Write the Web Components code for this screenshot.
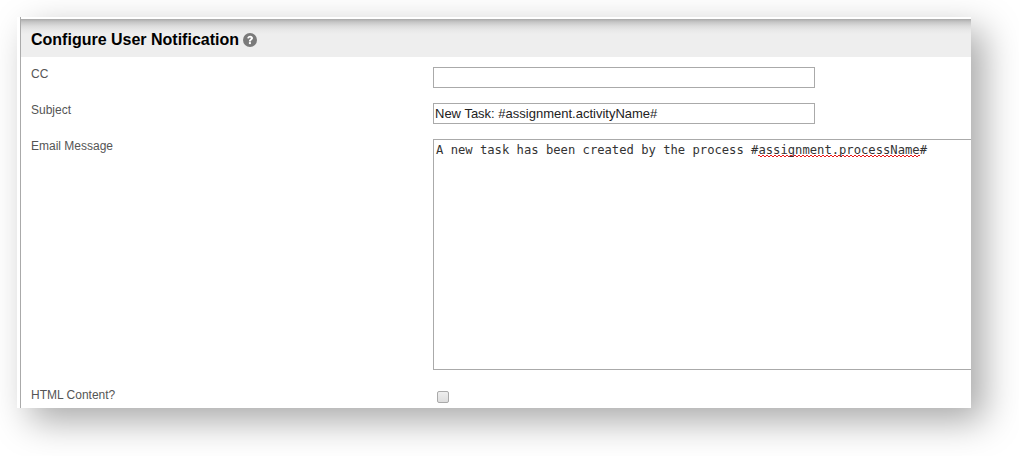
<!DOCTYPE html>
<html>
<head>
<meta charset="utf-8">
<title>Configure User Notification</title>
<style>
  html, body { margin: 0; background: #fff; }
  body { height: 456px; overflow: hidden; padding-top: 17px; padding-left: 17px; box-sizing: border-box; font-family: "Liberation Sans", Arial, sans-serif; }
</style>
</head>
<body>
<notification-panel>
  <panel-header slot="header">Configure User Notification</panel-header>
  <form-row label="CC"><text-field></text-field></form-row>
  <form-row label="Subject"><text-field>New Task: #assignment.activityName#</text-field></form-row>
  <form-row label="Email Message"><message-field>A new task has been created by the process #<u>assignment.processName</u>#</message-field></form-row>
  <form-row label="HTML Content?" centered><check-field></check-field></form-row>
</notification-panel>

<script>
class NotificationPanel extends HTMLElement {
  constructor() {
    super();
    this.attachShadow({ mode: 'open' });
    this.shadowRoot.innerHTML = `
    <style>
      :host {
        display: block;
        width: 954px;
        height: 391px;
        background: #fff;
        box-shadow: 13px 13px 34px rgba(0, 0, 0, 0.34);
      }
      .frame {
        height: 389px;
        margin-left: 3px;
        padding-top: 2px;
        overflow: hidden;
        position: relative;
      }
      .frame::before {
        content: '';
        position: absolute;
        left: 0;
        top: 0;
        bottom: 0;
        width: 1px;
        background: #aaa;
      }
      .rows {
        display: flex;
        flex-direction: column;
        gap: 15px;
        padding: 10px 0 0 11px;
      }
    </style>
    <div class="frame">
      <slot name="header"></slot>
      <div class="rows"><slot></slot></div>
    </div>
    `;
  }
}

class PanelHeader extends HTMLElement {
  constructor() {
    super();
    this.attachShadow({ mode: 'open' });
    this.shadowRoot.innerHTML = `
    <style>
      :host {
        display: flex;
        align-items: center;
        gap: 4px;
        height: 38px;
        padding: 4px 0 0 11px;
        box-sizing: border-box;
        background: linear-gradient(#a9a9a9 0, #c6c6c6 3px, #dcdcdc 7px, #e8e8e8 11px, #eee 15px);
        font: bold 16px "Liberation Sans", Arial, sans-serif;
        color: #000;
      }
      svg {
        display: block;
        width: 14px;
        height: 14px;
      }
    </style>
    <span><slot></slot></span>
    <svg viewBox="0 0 14 14">
      <circle cx="7" cy="7" r="7" fill="#7a7a7a"/>
      <path d="M4.2 5.3C4.4 3.6 5.6 2.7 7.1 2.7c1.7 0 2.9.9 2.9 2.4 0 1.1-.7 1.7-1.4 2.2-.5.3-.7.6-.7 1.1H5.9c0-1.1.4-1.7 1.1-2.2.5-.3.8-.6.8-1 0-.4-.3-.7-.8-.7-.5 0-.9.3-1 .9z" fill="#fff"/>
      <rect x="5.9" y="9.1" width="2" height="2" fill="#fff"/>
    </svg>
    `;
  }
}

class FormRow extends HTMLElement {
  constructor() {
    super();
    this.attachShadow({ mode: 'open' });
    this.shadowRoot.innerHTML = `
    <style>
      :host {
        display: grid;
        grid-template-columns: 402px 1fr;
      }
      :host([centered]) label {
        align-self: center;
      }
      label {
        font: 12px/14px "Liberation Sans", Arial, sans-serif;
        color: #555;
      }
    </style>
    <label></label>
    <div><slot></slot></div>
    `;
  }

  connectedCallback() {
    this.render();
  }

  render() {
    this.shadowRoot.querySelector('label').textContent = this.getAttribute('label');
  }
}

class TextField extends HTMLElement {
  constructor() {
    super();
    this.attachShadow({ mode: 'open' });
    this.shadowRoot.innerHTML = `
    <style>
      :host {
        display: block;
        width: 382px;
        height: 21px;
        box-sizing: border-box;
        border: 1px solid #aaa;
        padding: 0 1px;
        font: 13px/20px "Liberation Sans", Arial, sans-serif;
        color: #222;
        white-space: nowrap;
      }
    </style>
    <slot></slot>
    `;
  }
}

class MessageField extends HTMLElement {
  constructor() {
    super();
    this.attachShadow({ mode: 'open' });
    this.shadowRoot.innerHTML = `
    <style>
      :host {
        display: block;
        width: 560px;
        height: 231px;
        box-sizing: border-box;
        border: 1px solid #aaa;
        padding: 3px 2px;
        font: 12.18px/14px "DejaVu Sans Mono", monospace;
        color: #333;
        white-space: nowrap;
      }
      ::slotted(u) {
        text-decoration: none;
        background:
          linear-gradient(90deg, #e81818 50%, transparent 50%) 0 calc(100% - 1px) / 4px 1px repeat-x,
          linear-gradient(90deg, #e81818 50%, transparent 50%) 2px 100% / 4px 1px repeat-x;
      }
    </style>
    <slot></slot>
    `;
  }
}

class CheckField extends HTMLElement {
  constructor() {
    super();
    this.attachShadow({ mode: 'open' });
    this.shadowRoot.innerHTML = `
    <style>
      :host {
        display: block;
        height: 20px;
        padding: 6px 0 0 4px;
        box-sizing: border-box;
      }
      input {
        appearance: none;
        display: block;
        width: 12px;
        height: 12px;
        margin: 0;
        box-sizing: border-box;
        border: 1px solid #aaa;
        border-radius: 2px;
        background: linear-gradient(#eee, #dedede);
      }
    </style>
    <input type="checkbox">
    `;
  }
}

window.customElements.define('notification-panel', NotificationPanel);
window.customElements.define('panel-header', PanelHeader);
window.customElements.define('form-row', FormRow);
window.customElements.define('text-field', TextField);
window.customElements.define('message-field', MessageField);
window.customElements.define('check-field', CheckField);
</script>
</body>
</html>
